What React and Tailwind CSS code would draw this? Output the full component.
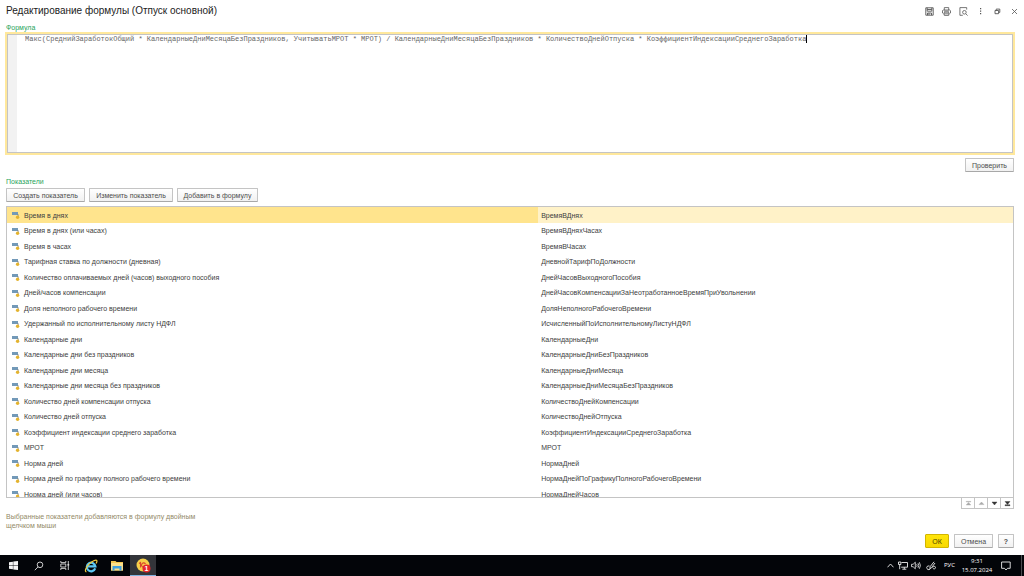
import { useState } from "react";

const FORMULA =
  "Макс(СреднийЗаработокОбщий * КалендарныеДниМесяцаБезПраздников, УчитыватьМРОТ * МРОТ) / КалендарныеДниМесяцаБезПраздников * КоличествоДнейОтпуска * КоэффициентИндексацииСреднегоЗаработка";

const INDICATORS = [
  ["Время в днях", "ВремяВДнях"],
  ["Время в днях (или часах)", "ВремяВДняхЧасах"],
  ["Время в часах", "ВремяВЧасах"],
  ["Тарифная ставка по должности (дневная)", "ДневнойТарифПоДолжности"],
  ["Количество оплачиваемых дней (часов) выходного пособия", "ДнейЧасовВыходногоПособия"],
  ["Дней/часов компенсации", "ДнейЧасовКомпенсацииЗаНеотработанноеВремяПриУвольнении"],
  ["Доля неполного рабочего времени", "ДоляНеполногоРабочегоВремени"],
  ["Удержанный по исполнительному листу НДФЛ", "ИсчисленныйПоИсполнительномуЛистуНДФЛ"],
  ["Календарные дни", "КалендарныеДни"],
  ["Календарные дни без праздников", "КалендарныеДниБезПраздников"],
  ["Календарные дни месяца", "КалендарныеДниМесяца"],
  ["Календарные дни месяца без праздников", "КалендарныеДниМесяцаБезПраздников"],
  ["Количество дней компенсации отпуска", "КоличествоДнейКомпенсации"],
  ["Количество дней отпуска", "КоличествоДнейОтпуска"],
  ["Коэффициент индексации среднего заработка", "КоэффициентИндексацииСреднегоЗаработка"],
  ["МРОТ", "МРОТ"],
  ["Норма дней", "НормаДней"],
  ["Норма дней по графику полного рабочего времени", "НормаДнейПоГрафикуПолногоРабочегоВремени"],
  ["Норма дней (или часов)", "НормаДнейЧасов"],
];

function Button({ children, className = "" }) {
  return (
    <button
      type="button"
      className={`flex h-[14px] items-center justify-center whitespace-nowrap rounded-[1px] border border-[#c4c4c4] border-b-[#a8a8a8] bg-linear-to-b from-white to-[#f1f1f1] text-[#4d4d4d] ${className}`}
    >
      {children}
    </button>
  );
}

function IndicatorIcon() {
  return (
    <svg width="8" height="8" viewBox="0 0 8 8" className="shrink-0" aria-hidden="true">
      <rect x="0" y="1" width="6" height="3" fill="#7299b8" />
      <path d="M5 3.5h1.2v2" fill="none" stroke="#7d8a94" strokeWidth="0.8" />
      <circle cx="5.6" cy="6.2" r="1.7" fill="#e3b32f" />
    </svg>
  );
}

// Иконки заголовка окна
function TitleIcons() {
  const btn = "flex h-3 w-3 items-center justify-center";
  return (
    <div className="flex items-center gap-[5px] text-[#555]">
      <button type="button" aria-label="Сохранить" className={btn}>
        <svg width="9" height="9" viewBox="0 0 9 9" fill="none" stroke="currentColor" strokeWidth="0.9">
          <path d="M.8.8h7.4v7.4H.8zM2.2.8v3.4h4.6V.8M2.2 2.5h4.6M2.5 8.2V6h4v2.2M4 6v2" />
        </svg>
      </button>
      <button type="button" aria-label="Печать" className={btn}>
        <svg width="9" height="9" viewBox="0 0 9 9" fill="none" stroke="currentColor" strokeWidth="0.8">
          <path d="M2.3 3V.6h4.4V3M2.2 6.8H1.4L.5 6V3.7L1.2 3h6.6l.7.7V6l-.9.8h-.8M2.3 5.2h4.4v3.2H2.3zM3 6.8h3M2 4.1h5" />
        </svg>
      </button>
      <button type="button" aria-label="Предварительный просмотр" className={btn}>
        <svg width="9" height="9" viewBox="0 0 9 9" fill="none" stroke="currentColor" strokeWidth="0.8">
          <path d="M3.8 8.3H.9V.6h6.8v2M6.8 6.8l1.8 1.8" />
          <circle cx="5.4" cy="5.3" r="1.8" />
        </svg>
      </button>
      <button type="button" aria-label="Ещё" className={btn}>
        <svg width="3" height="8" viewBox="0 0 3 8" fill="currentColor">
          <path d="M1 1h1.2v1.2H1zM1 3.5h1.2v1.2H1zM1 6h1.2v1.2H1z" />
        </svg>
      </button>
      <button type="button" aria-label="Восстановить окно" className={btn}>
        <svg width="7" height="7" viewBox="0 0 7 7" fill="none" stroke="currentColor" strokeWidth="0.9">
          <path d="M1 2.5h3.6v3.2H1zM2.2 2.3V1.1h3.6v3.3H4.7" />
        </svg>
      </button>
      <button type="button" aria-label="Закрыть" className={btn}>
        <svg width="7" height="7" viewBox="0 0 7 7" fill="none" stroke="currentColor" strokeWidth="0.8">
          <path d="M1 1l5 5M6 1L1 6" />
        </svg>
      </button>
    </div>
  );
}

const SCROLL_BUTTONS = [
  { label: "В начало", d: "M1.2 1.4h4.6v.6H1.2zM3.5 2.4L5.8 5H1.2z", off: true },
  { label: "Вверх", d: "M3.5 2L6 4.6H1z", off: true },
  { label: "Вниз", d: "M1 2h5L3.5 5z" },
  { label: "В конец", d: "M1 1.5h5L3.5 4.4zM1 4.8h5v.9H1z" },
];

function Taskbar() {
  return (
    <footer className="flex h-[21px] shrink-0 items-stretch justify-between bg-[#030509] text-white">
      <div className="flex items-stretch">
        <button type="button" aria-label="Пуск" className="flex w-[26px] items-center justify-center">
          <svg width="9" height="9" viewBox="0 0 9 9" fill="#f4f4f4">
            <path d="M0 1.2L3.9.7v3.5H0zM4.3.6L9 0v4.2H4.3zM0 4.7h3.9v3.5L0 7.7zM4.3 4.7H9V9l-4.7-.6z" />
          </svg>
        </button>
        <button type="button" aria-label="Поиск" className="flex w-[26px] items-center justify-center">
          <svg width="10" height="10" viewBox="0 0 10 10" fill="none" stroke="#e4e4e4" strokeWidth="0.9">
            <circle cx="6" cy="3.8" r="2.8" />
            <path d="M4 5.9L.8 9.2" />
          </svg>
        </button>
        <button type="button" aria-label="Представление задач" className="flex w-[26px] items-center justify-center">
          <svg width="10" height="9" viewBox="0 0 10 9" fill="none" stroke="#dcdcdc" strokeWidth="0.9">
            <path d="M.8 0v1.6h5V0M.8 3h5v3h-5zM.8 9V7.4h5V9M8.3 0v9" />
            <path d="M7.5 3h1.7v1.6H7.5z" fill="#dcdcdc" stroke="none" />
          </svg>
        </button>
        <button type="button" aria-label="Internet Explorer" className="flex w-[26px] items-center justify-center">
          <svg width="14" height="14" viewBox="0 0 14 14" fill="none">
            <path d="M11.2 9.4A4.3 4.3 0 1 1 11.4 7.4H4" stroke="#5cc8f5" strokeWidth="2.2" />
            <path d="M2.4 13C.2 12.4 2 8.2 5 5.2C8 2.2 12 .2 12.8 1.5C13.2 2.3 12.6 3.6 12 4.5" stroke="#f3cb3c" strokeWidth="1.2" />
          </svg>
        </button>
        <button type="button" aria-label="Проводник" className="flex w-[26px] items-center justify-center">
          <svg width="12" height="11" viewBox="0 0 12 11">
            <path d="M0 1h4.5l1 1H12v8.5H0z" fill="#f3c64f" />
            <path d="M0 3h12v7.5H0z" fill="#fbe08c" />
            <path d="M1.5 6h9v4.5h-2V8.5h-5v2h-2z" fill="#3f9fdd" />
          </svg>
        </button>
        <button
          type="button"
          aria-label="1С:Предприятие"
          className="flex w-[26px] items-center justify-center border-b border-[#7fb2e0] bg-[#33353a]"
        >
          <svg width="15" height="15" viewBox="0 0 15 15">
            <circle cx="7" cy="7" r="6.5" fill="#f7d04a" />
            <path d="M3 5.5L4.5 4.5V9.5M9.5 5.8A2.2 2.2 0 1 0 7.8 9.3H10" fill="none" stroke="#d9472b" strokeWidth="1.1" />
            <circle cx="10.5" cy="10.5" r="4" fill="#e5262b" />
            <text x="10.5" y="13" textAnchor="middle" fontSize="7" fill="#fff" fontWeight="bold">
              1
            </text>
          </svg>
        </button>
      </div>

      <div className="flex items-center font-['Open_Sans',sans-serif] text-[6px] leading-[9px]">
        <svg width="7" height="5" viewBox="0 0 7 5" fill="none" stroke="#eee" strokeWidth="0.9" className="mr-1">
          <path d="M.5 4.3L3.5 1l3 3.3" />
        </svg>
        <svg width="10" height="9" viewBox="0 0 10 9" fill="none" stroke="#eee" strokeWidth="0.9" className="mr-[3px]">
          <path d="M3.5 1.5h6v4.7H3.2M6.3 6.2v2M4.3 8.2h4M.5 1h2.4v2.5H.5zM1.7 3.5v4.7" />
        </svg>
        <svg width="10" height="9" viewBox="0 0 10 9" fill="none" stroke="#eee" strokeWidth="0.8" className="mr-[5px]">
          <path d="M.5 3.3h1.6L4.3 1.2v6.6L2.1 5.7H.5zM5.7 3.2q.9 1.3 0 2.6M7 2.2q1.7 2.3 0 4.6M8.3 1.2q2.3 3.3 0 6.6" />
        </svg>
        <svg width="11" height="10" viewBox="0 0 11 10" fill="none" stroke="#eee" strokeWidth="0.9" className="mr-[7px]">
          <path d="M8 .8L4.2 5.6l-.4 2 1.7-.9L9 2M3.5 5C1.5 4.5 0 6 1 7.7s3 .8 3.6-.2M6.5 6.5c1-1.5 3-1.5 3 0s-1.7 1.7-2.6.8" />
        </svg>
        <span className="mr-[6px]">РУС</span>
        <div className="w-8 text-center whitespace-nowrap">
          <div>9:31</div>
          <div>15.07.2024</div>
        </div>
        <button type="button" aria-label="Уведомления" className="mr-[10px] ml-2">
          <svg width="10" height="10" viewBox="0 0 10 10" fill="none" stroke="#eee" strokeWidth="0.9">
            <path d="M.6 1h8.6v6.3H6.5L5 9 3.5 7.3H.6z" />
          </svg>
        </button>
        <div className="mr-[2px] h-full w-px bg-[#4a4c50]" />
      </div>
    </footer>
  );
}

export default function App() {
  const [formula, setFormula] = useState(FORMULA);
  const [selected, setSelected] = useState(0);

  return (
    <div className="flex h-screen flex-col overflow-hidden bg-white font-['Liberation_Sans',Arial,sans-serif] text-[7px] leading-[9px] text-[#404040]">
      <main className="flex min-h-0 flex-1 flex-col pr-[10px] pl-[6px]">
        <header className="-mr-[6px] flex h-[22px] shrink-0 items-center justify-between">
          <h1 className="text-[10px] leading-3 text-[#222]">Редактирование формулы (Отпуск основной)</h1>
          <TitleIcons />
        </header>

        <label htmlFor="formula" className="mt-px text-[#1fa45b]">
          Формула
        </label>
        <div className="-mx-px h-[123px] shrink-0 border-2 border-[#ffe89c]">
          <div className="flex h-full items-start overflow-hidden border border-[#c4c4c4]">
            <div className="h-full w-[9px] shrink-0 bg-[#f2f2f2]" />
            <textarea
              id="formula"
              value={formula}
              onChange={(e) => setFormula(e.target.value)}
              spellCheck={false}
              rows={1}
              className="ml-2 field-sizing-content h-2 resize-none overflow-hidden font-['Liberation_Mono',monospace] text-[7px] leading-2 whitespace-pre text-[#666] outline-none"
            />
            <span className="h-2 w-px shrink-0 bg-black" />
          </div>
        </div>
        <Button className="mt-[3px] w-[49px] shrink-0 self-end">Проверить</Button>

        <h2 className="mt-[5px] text-[#1fa45b]">Показатели</h2>
        <div className="mt-[2px] flex shrink-0 gap-1">
          <Button className="w-[79px]">Создать показатель</Button>
          <Button className="w-[84px]">Изменить показатель</Button>
          <Button className="w-[81px]">Добавить в формулу</Button>
        </div>

        <div className="mt-1 min-h-0 flex-1 overflow-hidden border border-[#c4c4c4]">
          <table className="w-full table-fixed border-collapse">
            <colgroup>
              <col className="w-[52.8%]" />
              <col />
            </colgroup>
            <tbody>
              {INDICATORS.map(([name, id], i) => (
                <tr
                  key={id}
                  onClick={() => setSelected(i)}
                  onDoubleClick={() => setFormula(formula + id)}
                  className="odd:h-4 even:h-[15px]"
                >
                  <td className={`p-0 ${i === selected ? "bg-[#ffe48d]" : ""}`}>
                    <div className="flex items-center gap-1 pl-[5px]">
                      <IndicatorIcon />
                      {name}
                    </div>
                  </td>
                  <td className={`p-0 pl-[3px] ${i === selected ? "bg-[#fff2c8]" : ""}`}>{id}</td>
                </tr>
              ))}
            </tbody>
          </table>
        </div>

        <div className="flex h-[11px] shrink-0 self-end border-b border-l border-[#c4c4c4]">
          {SCROLL_BUTTONS.map((b) => (
            <button
              key={b.label}
              type="button"
              aria-label={b.label}
              className={`flex w-[13px] items-center justify-center border-r border-[#c4c4c4] ${b.off ? "text-[#aaa]" : "text-[#333]"}`}
            >
              <svg width="7" height="7" viewBox="0 0 7 7" fill="currentColor" stroke="currentColor" strokeWidth="0.4">
                <path d={b.d} />
              </svg>
            </button>
          ))}
        </div>

        <p className="mt-[3px] w-[200px] text-[#938a68]">Выбранные показатели добавляются в формулу двойным щелчком мыши</p>

        <div className="mt-1 mb-[7px] flex shrink-0 justify-end gap-[5px]">
          <button
            type="button"
            className="flex h-[14px] w-6 items-center justify-center rounded-[1px] border border-[#d2b500] bg-linear-to-b from-[#ffe50a] to-[#f8d800] text-[#4d4400]"
          >
            ОК
          </button>
          <Button className="w-[39px]">Отмена</Button>
          <Button className="w-4 font-bold">?</Button>
        </div>
      </main>
      <Taskbar />
    </div>
  );
}
